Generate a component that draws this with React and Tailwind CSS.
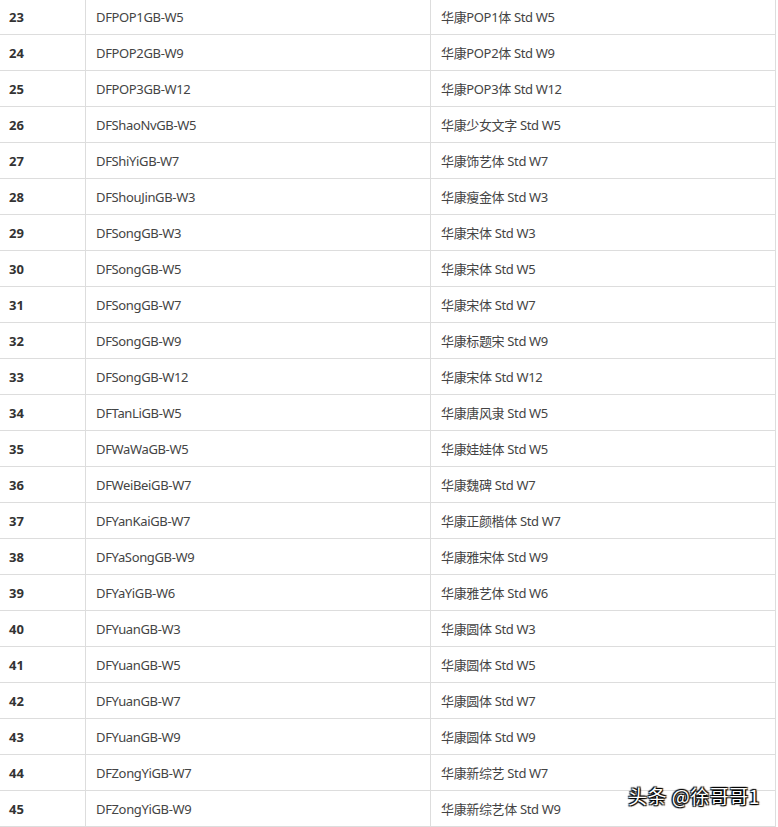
import React from "react";

const rows = [
  [23, "DFPOP1GB-W5", "华康POP1体 Std W5"],
  [24, "DFPOP2GB-W9", "华康POP2体 Std W9"],
  [25, "DFPOP3GB-W12", "华康POP3体 Std W12"],
  [26, "DFShaoNvGB-W5", "华康少女文字 Std W5"],
  [27, "DFShiYiGB-W7", "华康饰艺体 Std W7"],
  [28, "DFShouJinGB-W3", "华康瘦金体 Std W3"],
  [29, "DFSongGB-W3", "华康宋体 Std W3"],
  [30, "DFSongGB-W5", "华康宋体 Std W5"],
  [31, "DFSongGB-W7", "华康宋体 Std W7"],
  [32, "DFSongGB-W9", "华康标题宋 Std W9"],
  [33, "DFSongGB-W12", "华康宋体 Std W12"],
  [34, "DFTanLiGB-W5", "华康唐风隶 Std W5"],
  [35, "DFWaWaGB-W5", "华康娃娃体 Std W5"],
  [36, "DFWeiBeiGB-W7", "华康魏碑 Std W7"],
  [37, "DFYanKaiGB-W7", "华康正颜楷体 Std W7"],
  [38, "DFYaSongGB-W9", "华康雅宋体 Std W9"],
  [39, "DFYaYiGB-W6", "华康雅艺体 Std W6"],
  [40, "DFYuanGB-W3", "华康圆体 Std W3"],
  [41, "DFYuanGB-W5", "华康圆体 Std W5"],
  [42, "DFYuanGB-W7", "华康圆体 Std W7"],
  [43, "DFYuanGB-W9", "华康圆体 Std W9"],
  [44, "DFZongYiGB-W7", "华康新综艺 Std W7"],
  [45, "DFZongYiGB-W9", "华康新综艺体 Std W9"],
];

export default function App() {
  return (
    <div
      className="relative w-[778px] h-[827px] overflow-hidden bg-white"
      style={{ fontFamily: '"Noto Sans", "Noto Sans CJK SC", sans-serif' }}
    >
      <div className="-mt-px w-[776px] border-r border-[#dddddd] flex flex-col">
        {rows.map(([n, a, b]) => (
          <div key={n} className="flex h-9 border-b border-[#dddddd] text-[13px] text-[#444] tracking-[-0.35px]">
            <div className="w-[86px] border-r border-[#dddddd] pt-[2px] pl-[9px] flex items-center font-bold text-[#333] tracking-normal">
              {n}
            </div>
            <div className="w-[345px] border-r border-[#dddddd] pt-[2px] pl-[10px] flex items-center">
              {a}
            </div>
            <div className="flex-1 pt-[2px] pl-[10px] flex items-center">{b}</div>
          </div>
        ))}
      </div>
      <div
        className="absolute left-[628px] top-[786px] text-[19px] leading-none text-white tracking-[0.5px]"
        style={{
          fontFamily: '"Noto Sans CJK SC", sans-serif',
          textShadow:
            "0 0 1px #000, 1px 1px 1px #000, -1px -1px 1px #000, 1px -1px 1px #000, -1px 1px 1px #000",
        }}
      >
        头条 @徐哥哥1
      </div>
    </div>
  );
}
